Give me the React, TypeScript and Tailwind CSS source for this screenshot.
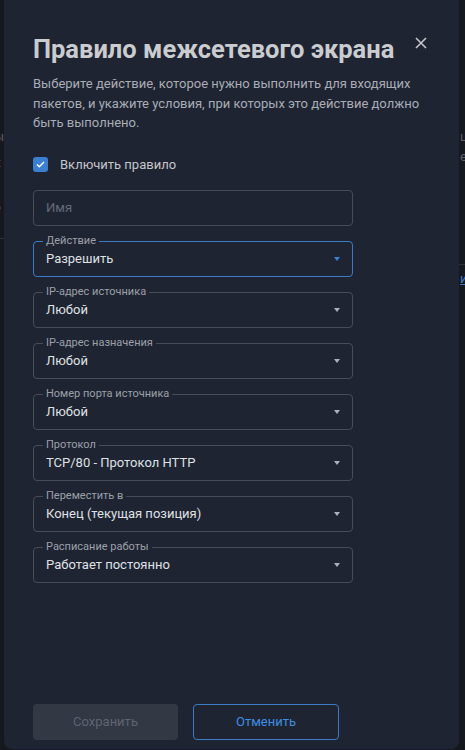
import React, { useState } from "react";

type SelectField = {
  label: string;
  value: string;
  active?: boolean;
};

const fields: SelectField[] = [
  { label: "Действие", value: "Разрешить", active: true },
  { label: "IP-адрес источника", value: "Любой" },
  { label: "IP-адрес назначения", value: "Любой" },
  { label: "Номер порта источника", value: "Любой" },
  { label: "Протокол", value: "TCP/80 - Протокол HTTP" },
  { label: "Переместить в", value: "Конец (текущая позиция)" },
  { label: "Расписание работы", value: "Работает постоянно" },
];

const OutlinedSelect: React.FC<SelectField> = ({ label, value, active }) => (
  <div
    className={`relative flex items-center h-[36px] w-[320px] rounded-[4px] border pl-[12px] pr-[8px] ${
      active ? "border-[#3b7bc4]" : "border-[#474c59]"
    }`}
  >
    {/* floating label sits on the top border */}
    <span className="absolute left-[9px] top-[-8px] bg-[#1f2433] px-[3px] text-[11px] leading-[14px] text-[#9ca0a8]">
      {label}
    </span>
    <span className="flex-1 pt-[1px] text-[13px] text-[#dfe1e4]">{value}</span>
    <svg width="6" height="4" viewBox="0 0 6 4" className="mr-[4px]">
      <path d="M0 0h6L3 4z" fill={active ? "#3b82d6" : "#aeb2b8"} />
    </svg>
  </div>
);

const App: React.FC = () => {
  const [enabled, setEnabled] = useState(true);

  return (
    <div
      className="flex h-[750px] w-[465px] overflow-hidden bg-[#15181f]"
      style={{ fontFamily: "Roboto, 'Noto Sans', sans-serif" }}
    >
      {/* page behind the drawer, left edge */}
      <div className="relative w-[4px] shrink-0 overflow-hidden text-[13px] text-[#5a5f6a]">
        <div className="pt-[127px] -ml-[6px] leading-[20px]">
          <div>ы</div>
          <div className="mt-[6px]">к</div>
          <div className="mt-[25px]">е</div>
        </div>
        <div className="mt-[20px] h-px w-full bg-[#2c303a]" />
      </div>

      {/* drawer */}
      <div className="flex h-[749px] w-[455px] shrink-0 flex-col rounded-b-lg bg-[#1f2433] pl-[29px] pr-[30px] pt-[32px] pb-[9px]">
        <div className="flex items-start justify-between">
          <h1 className="text-[25.5px] font-bold leading-[34px] text-[#cbcccf]">
            Правило межсетевого экрана
          </h1>
          <button className="mt-[5px] mr-[2px] text-[#c4c6ca]">
            <svg width="12" height="12" viewBox="0 0 12 12">
              <path d="M1 1l10 10M11 1L1 11" stroke="currentColor" strokeWidth="1.6" />
            </svg>
          </button>
        </div>

        <p className="mt-[8px] w-[392px] text-[13px] leading-[19.5px] text-[#a9adb5]">
          Выберите действие, которое нужно выполнить для входящих пакетов, и
          укажите условия, при которых это действие должно быть выполнено.
        </p>

        <label className="mt-[22px] flex h-[20px] cursor-pointer items-center gap-[12px]">
          <span
            onClick={() => setEnabled(!enabled)}
            className="flex h-[15px] w-[15px] items-center justify-center rounded-[3px] bg-[#3a7fd0]"
          >
            {enabled && (
              <svg width="9" height="7" viewBox="0 0 9 7">
                <path d="M1 3.6l2.3 2.2L8 1" stroke="#fff" strokeWidth="1.4" fill="none" />
              </svg>
            )}
          </span>
          <span className="text-[13px] text-[#c4c6ca]">Включить правило</span>
        </label>

        <div className="mt-[15px] flex flex-col gap-[15px]">
          <div className="flex h-[36px] w-[320px] items-center rounded-[4px] border border-[#474c59] px-[12px] text-[13px] text-[#646a78]">
            Имя
          </div>
          {fields.map((f) => (
            <OutlinedSelect key={f.label} {...f} />
          ))}
        </div>

        <div className="mt-auto flex gap-[15px]">
          <button className="h-[36px] w-[145px] rounded-[4px] bg-[#333845] text-[13px] text-[#5f6470]">
            Сохранить
          </button>
          <button className="h-[36px] w-[146px] rounded-[4px] border border-[#3b7bc4] text-[13px] text-[#3d8ee0]">
            Отменить
          </button>
        </div>
      </div>

      {/* page behind the drawer, right edge */}
      <div className="relative flex-1 overflow-hidden text-[13px] text-[#5a5f6a]">
        <div className="pt-[127px] pl-[1px] leading-[20px]">
          <div>ц</div>
          <div>е</div>
        </div>
        <div className="mt-[97px] h-px w-full bg-[#2c303a]" />
        <div className="mt-[6px] pl-[1px] text-[13px] leading-[16px] text-[#3b7bc4] underline">и</div>
      </div>
    </div>
  );
};

export default App;
